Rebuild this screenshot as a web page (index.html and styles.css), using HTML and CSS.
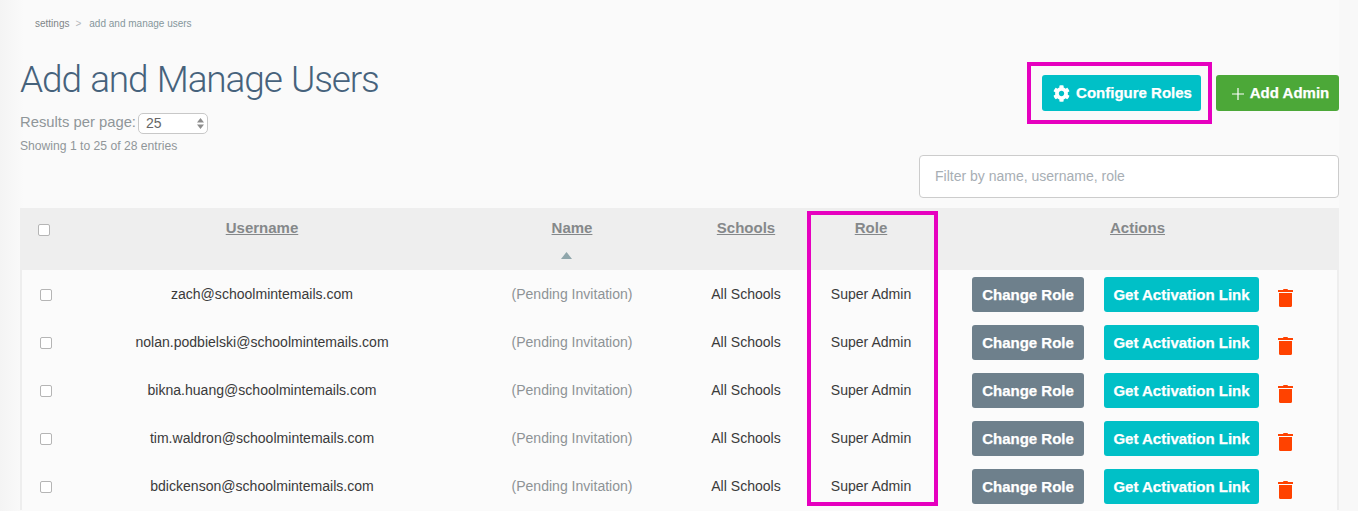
FILE: index.html
```html
<!DOCTYPE html>
<html lang="en">
<head>
<meta charset="utf-8">
<title>Add and Manage Users</title>
<link rel="stylesheet" href="styles.css">
</head>
<body>
<svg class="defs" width="0" height="0" aria-hidden="true">
  <symbol id="trash" viewBox="0 0 15 18">
    <path d="M5.500 0h4l.5 1h4.600c.2 0 .4.200.4.400V3H0V1.400C0 1.200.2 1 .4 1H5z"/>
    <path d="M1 4h13v12.800c0 .7-.5 1.200-1.200 1.200H2.200C1.500 18 1 17.500 1 16.800z"/>
  </symbol>
</svg>
<main class="page">
  <nav class="crumbs"><span class="crumb-root">settings</span><span class="crumb-sep">&gt;</span><span class="crumb-leaf">add and manage users</span></nav>
  <div class="top">
    <div class="top-left">
      <h1 class="title">Add and Manage Users</h1>
      <div class="per-page">
        <label class="per-label" for="pp">Results per page:</label>
        <span class="select-wrap">
          <select id="pp" class="select"><option>25</option></select>
          <svg class="select-arrows" viewBox="0 0 7 11" width="7" height="11"><path d="M3.500 0L7 4.500H0zM3.500 11L0 6.500H7z"/></svg>
        </span>
      </div>
      <p class="showing">Showing 1 to 25 of 28 entries</p>
    </div>
    <div class="top-right">
      <div class="top-buttons">
        <button class="btn btn-teal btn-top btn-config" type="button">
          <svg class="gear" viewBox="0 0 512 512" width="17" height="17"><path d="M487.400 315.700l-42.600-24.600c4.300-23.200 4.300-47 0-70.200l42.600-24.600c4.900-2.800 7.100-8.600 5.500-14-11.100-35.600-30-67.800-54.700-94.600-3.800-4.100-10-5.100-14.800-2.300L380.800 110c-17.900-15.400-38.500-27.300-60.800-35.100V25.800c0-5.600-3.900-10.500-9.400-11.700-36.700-8.200-74.300-7.800-109.200 0-5.500 1.200-9.400 6.100-9.400 11.700V75c-22.200 7.900-42.800 19.800-60.800 35.100L88.700 85.500c-4.900-2.800-11-1.900-14.800 2.300-24.700 26.700-43.600 58.900-54.700 94.600-1.700 5.400.6 11.200 5.500 14L67.300 221c-4.300 23.200-4.300 47 0 70.200l-42.600 24.600c-4.900 2.800-7.100 8.600-5.500 14 11.100 35.600 30 67.800 54.700 94.600 3.800 4.100 10 5.100 14.800 2.300l42.600-24.600c17.900 15.400 38.500 27.300 60.800 35.100v49.200c0 5.600 3.900 10.500 9.400 11.700 36.700 8.200 74.300 7.800 109.200 0 5.500-1.200 9.400-6.100 9.400-11.700v-49.200c22.200-7.900 42.800-19.800 60.800-35.100l42.600 24.600c4.900 2.800 11 1.900 14.800-2.300 24.700-26.700 43.600-58.900 54.700-94.600 1.500-5.500-.7-11.300-5.600-14.100zM256 336c-44.100 0-80-35.900-80-80s35.900-80 80-80 80 35.900 80 80-35.900 80-80 80z"/></svg>
          <span>Configure Roles</span>
        </button>
        <button class="btn btn-green btn-top btn-add" type="button">
          <svg class="plus" viewBox="0 0 12 12" width="12" height="12"><path d="M6 0v12M0 6h12"/></svg>
          <span>Add Admin</span>
        </button>
      </div>
      <input class="filter" type="text" placeholder="Filter by name, username, role">
    </div>
  </div>

  <table class="users">
    <colgroup>
      <col class="c-check"><col class="c-user"><col class="c-name"><col class="c-school"><col class="c-role"><col class="c-actions">
    </colgroup>
    <thead>
      <tr>
        <th class="th-check"><input class="check check-head" type="checkbox"></th>
        <th><span class="sort">Username</span></th>
        <th><span class="sort">Name</span><svg class="sort-arrow" viewBox="0 0 11 7" width="11" height="7"><path d="M5.500 0L11 7H0z"/></svg></th>
        <th><span class="sort">Schools</span></th>
        <th><span class="sort">Role</span></th>
        <th><span class="sort">Actions</span></th>
      </tr>
    </thead>
    <tbody>
      <tr>
        <td class="td-check"><input class="check" type="checkbox"></td>
        <td>zach@schoolmintemails.com</td>
        <td class="pending">(Pending Invitation)</td>
        <td>All Schools</td>
        <td>Super Admin</td>
        <td class="td-actions"><div class="actions"><button class="btn btn-slate" type="button">Change Role</button><button class="btn btn-teal btn-link" type="button">Get Activation Link</button><svg class="trash"><use href="#trash"/></svg></div></td>
      </tr>
      <tr>
        <td class="td-check"><input class="check" type="checkbox"></td>
        <td>nolan.podbielski@schoolmintemails.com</td>
        <td class="pending">(Pending Invitation)</td>
        <td>All Schools</td>
        <td>Super Admin</td>
        <td class="td-actions"><div class="actions"><button class="btn btn-slate" type="button">Change Role</button><button class="btn btn-teal btn-link" type="button">Get Activation Link</button><svg class="trash"><use href="#trash"/></svg></div></td>
      </tr>
      <tr>
        <td class="td-check"><input class="check" type="checkbox"></td>
        <td>bikna.huang@schoolmintemails.com</td>
        <td class="pending">(Pending Invitation)</td>
        <td>All Schools</td>
        <td>Super Admin</td>
        <td class="td-actions"><div class="actions"><button class="btn btn-slate" type="button">Change Role</button><button class="btn btn-teal btn-link" type="button">Get Activation Link</button><svg class="trash"><use href="#trash"/></svg></div></td>
      </tr>
      <tr>
        <td class="td-check"><input class="check" type="checkbox"></td>
        <td>tim.waldron@schoolmintemails.com</td>
        <td class="pending">(Pending Invitation)</td>
        <td>All Schools</td>
        <td>Super Admin</td>
        <td class="td-actions"><div class="actions"><button class="btn btn-slate" type="button">Change Role</button><button class="btn btn-teal btn-link" type="button">Get Activation Link</button><svg class="trash"><use href="#trash"/></svg></div></td>
      </tr>
      <tr>
        <td class="td-check"><input class="check" type="checkbox"></td>
        <td>bdickenson@schoolmintemails.com</td>
        <td class="pending">(Pending Invitation)</td>
        <td>All Schools</td>
        <td>Super Admin</td>
        <td class="td-actions"><div class="actions"><button class="btn btn-slate" type="button">Change Role</button><button class="btn btn-teal btn-link" type="button">Get Activation Link</button><svg class="trash"><use href="#trash"/></svg></div></td>
      </tr>
    </tbody>
  </table>
  <div class="mark mark-config"></div>
  <div class="mark mark-role"></div>
</main>
</body>
</html>
```
FILE: styles.css
```css
* { box-sizing: border-box; }
html, body { margin: 0; height: 511px; overflow: hidden; }
body {
  background: linear-gradient(to right, #f4f4f4 0, #f9f9f9 20px, #fafafa 24px, #fafafa 1339px, #f8f8f8 1339px);
  font-family: "Liberation Sans", Arial, sans-serif;
  color: #3a3a3a;
}
.defs { position: absolute; }
.page { position: relative; height: 511px; padding: 18px 19px 0 20px; }

.crumbs { display: flex; height: 11px; padding-left: 15px; font-size: 10px; line-height: 11px; }
.crumb-root { color: #7f8588; }
.crumb-sep { margin: 0 8px 0 6px; color: #b4b8ba; }
.crumb-leaf { color: #86979c; }

.top { display: flex; justify-content: space-between; height: 179px; }
.title { margin: 29px 0 0; font-family: Roboto, "Liberation Sans", sans-serif; font-weight: 300; font-size: 37px; letter-spacing: -1.150px; word-spacing: 1.500px; line-height: 44px; color: #46627c; }
.per-page { display: flex; align-items: center; height: 22px; margin-top: 10px; }
.per-label { width: 117px; padding-bottom: 2px; font-size: 14.800px; white-space: nowrap; color: #8f9699; }
.select-wrap { position: relative; display: block; width: 70px; height: 21px; margin-left: 1px; }
.select { appearance: none; width: 100%; height: 100%; padding: 0 0 0 7px; border: 1px solid #c8c8c8; border-radius: 5px; background: #fff; font: 14px "Liberation Sans", Arial, sans-serif; color: #666; }
.select-arrows { position: absolute; top: 5px; right: 4px; fill: #8d8d8d; pointer-events: none; }
.showing { margin: 5px 0 0; font-size: 12.150px; line-height: 14px; color: #909699; }

.top-right { display: flex; flex-direction: column; align-items: flex-end; padding-top: 46px; }
.top-buttons { display: flex; gap: 15px; }
.btn { border: 0; border-radius: 3px; color: #fff; font: bold 15px "Liberation Sans", Arial, sans-serif; -webkit-text-stroke: 0.25px #fff; padding: 0; }
.btn-top { display: flex; align-items: center; justify-content: center; height: 36px; padding-bottom: 1px; }
.btn-config { width: 159px; gap: 6px; padding-left: 2px; }
.btn-add { width: 123px; gap: 6px; padding-left: 6px; }
.btn-teal { background: #00c0c7; }
.btn-green { background: #4ca838; }
.btn-slate { background: #6e808c; width: 112px; height: 35px; padding-top: 1px; }
.btn-link { width: 155px; height: 35px; margin-left: 20px; padding-top: 1px; }
.gear { fill: #fff; margin-top: 2px; }
.plus { stroke: #fff; stroke-width: 1.200; fill: none; margin-top: 3px; }
.filter { width: 420px; height: 43px; margin-top: 44px; padding: 0 15px 2px; border: 1px solid #ccc; border-radius: 4px; background: #fff; font: 14px "Liberation Sans", Arial, sans-serif; }
.filter::placeholder { color: #a7aeb4; }

.users { width: 1319px; border-collapse: separate; border-spacing: 0; table-layout: fixed; font-size: 14.050px; }
.c-check { width: 46px; }
.c-user { width: 392px; }
.c-name { width: 228px; }
.c-school { width: 120px; }
.c-role { width: 130px; }
thead tr { height: 62px; background: #eeeeee; }
th { padding: 11px 0 0; vertical-align: top; text-align: center; font-size: 15px; line-height: 18px; color: #85888a; }
.sort { text-decoration: underline; }
.sort-arrow { display: block; margin: 15px 0 0 102.500px; fill: #8fa6ab; }
.th-check { padding: 0; vertical-align: top; }
tbody tr { height: 48px; }
tbody { background: #fbfbfb; }
td { padding: 0; text-align: center; vertical-align: middle; color: #3a3a3a; }
td.pending { color: #8e9396; }
.td-check { border-left: 2px solid #eeeeee; }
.check { appearance: none; display: block; width: 12px; height: 12px; margin: 2px 0 0 18px; border: 1px solid #b5b5b5; border-radius: 2px; background: #fff; }
.check-head { margin: 16px 0 0 18px; }
.td-actions { border-right: 2px solid #eeeeee; }
.actions { display: flex; align-items: center; height: 48px; padding-left: 36px; }
.trash { width: 15px; height: 18px; margin-left: 19px; margin-top: 7px; fill: #ff4200; }

.mark { position: absolute; border: 4px solid #e600bf; }
.mark-config { left: 1027px; top: 62px; width: 185px; height: 62px; }
.mark-role { left: 807px; top: 211px; width: 131px; height: 295px; }
```
